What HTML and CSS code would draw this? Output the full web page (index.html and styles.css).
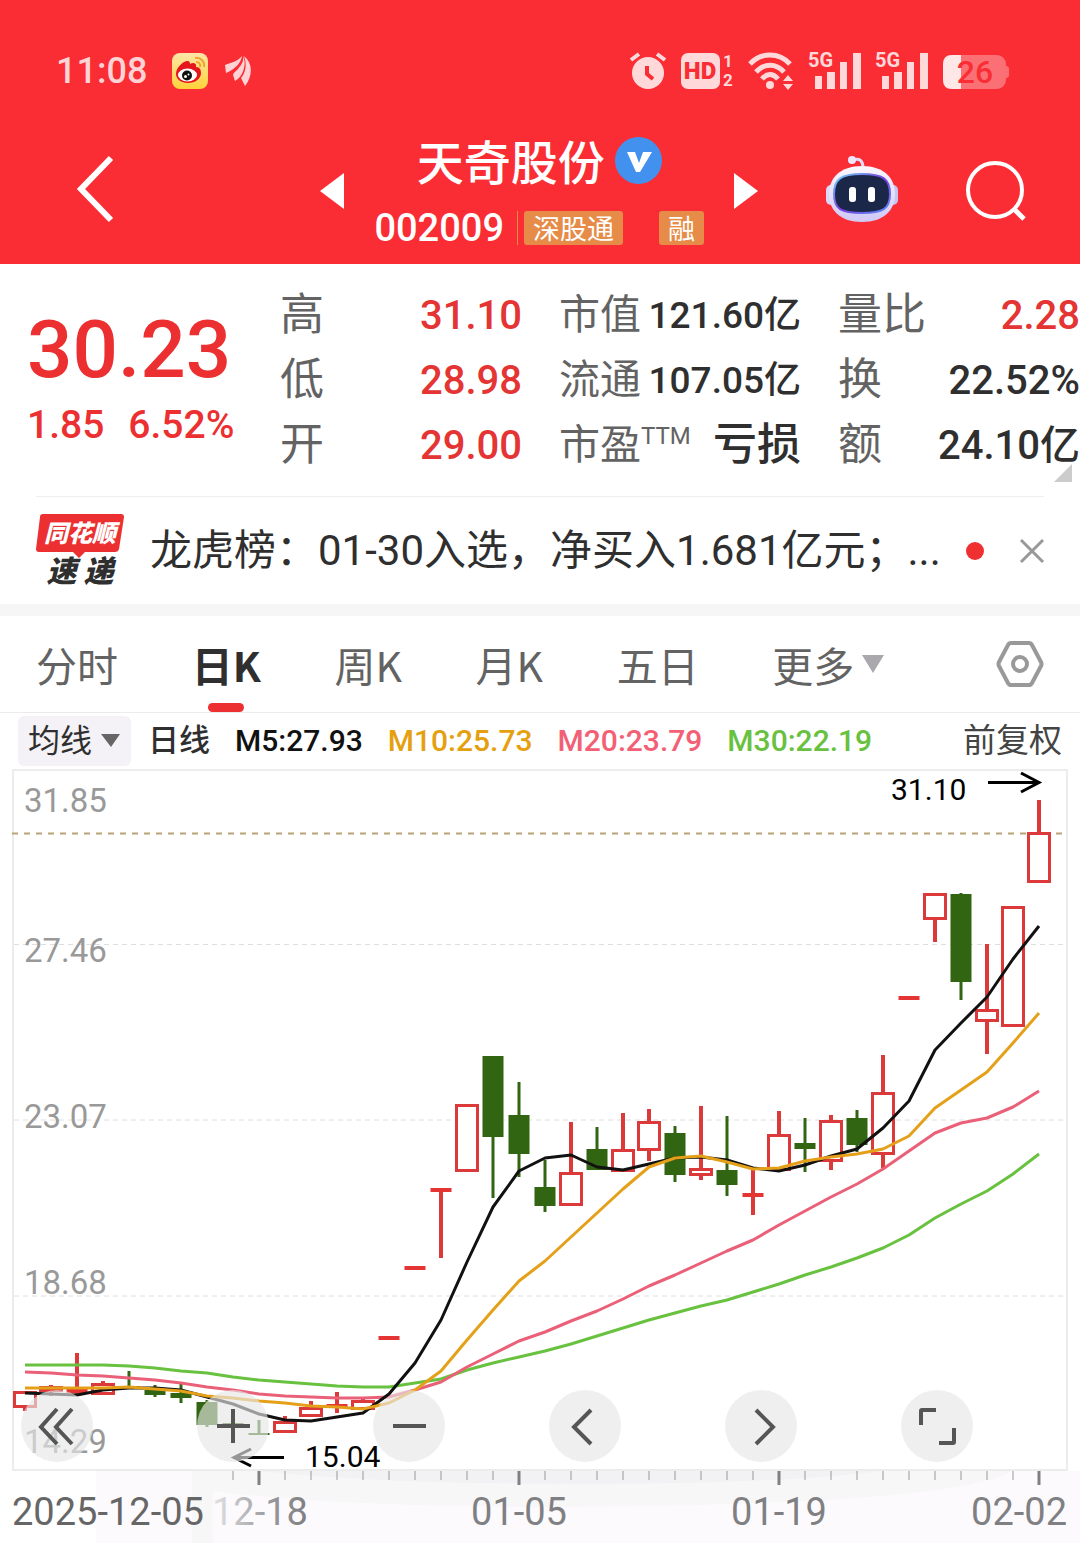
FILE: index.html
```html
<!DOCTYPE html>
<html lang="zh-CN">
<head>
    <meta charset="UTF-8">
    <meta name="viewport" content="width=device-width, initial-scale=1.0">
    <title>天奇股份 002009</title>
    <link rel="stylesheet" href="styles.css">
</head>
<body>
    <header class="top">
        <div class="status">
            <span class="clock">11:08</span>
            <svg class="weibo" width="36" height="36" viewBox="0 0 36 36">
                <defs>
                    <linearGradient id="wb" x1="0" y1="0" x2="0" y2="1">
                        <stop offset="0" stop-color="#fde6a8"/>
                        <stop offset="1" stop-color="#ffd23a"/>
                    </linearGradient>
                </defs>
                <rect width="36" height="36" rx="8" fill="url(#wb)"/>
                <path d="M4 21C4 15 10 9 15 8c3 0 3 2 3 3 3-2 7-1 6 3 4 0 5 3 5 6 0 6-6 10-13 10S4 26 4 21z" fill="#e5171c"/>
                <ellipse cx="15.500" cy="22" rx="9.500" ry="6.500" fill="#fff"/>
                <circle cx="15" cy="22.500" r="5" fill="#111"/>
                <circle cx="13.500" cy="23.500" r="1.500" fill="#fff"/>
                <circle cx="16.500" cy="21.500" r="1" fill="#fff"/>
                <path d="M23 5c6-1 10 4 9 9M24 9c3 0 5 2 4 5" fill="none" stroke="#f0a52c" stroke-width="2"/>
            </svg>
            <svg width="26" height="30" viewBox="0 0 26 30" fill="#ffd3d5">
                <path d="M0 9C5 7 12 6 17 0 16 7 10 13 1 17z"/>
                <path d="M18 0c1 6-2 9-5 13-3 3-5 4-5 6l2 6c5-3 8-8 9-13 1-4 1-8-1-12z"/>
                <path d="M19 0c9 7 9 20 1 30l-4-8c5-6 6-14 3-22z"/>
            </svg>
            <div class="status-right">
                <svg width="36" height="38" viewBox="0 0 36 38">
                    <circle cx="18" cy="21" r="16" fill="#ffd9da"/>
                    <path d="M1 8l8-6M35 8l-8-6" stroke="#ffd9da" stroke-width="4"/>
                    <path d="M17 14v8l6 5" fill="none" stroke="#fa2d34" stroke-width="4"/>
                </svg>
                <svg width="52" height="38" viewBox="0 0 52 38" fill="#ffd9da">
                    <rect y="1" width="39" height="36" rx="7"/>
                    <text class="hd" x="19" y="27" text-anchor="middle">HD</text>
                    <text class="sim" x="42" y="15">1</text>
                    <text class="sim" x="42" y="34">2</text>
                </svg>
                <svg width="46" height="38" viewBox="0 0 46 38" fill="none" stroke="#ffd9da" stroke-width="5">
                    <path d="M2 12C13 0 31 0 42 12M8 20C16 11 28 11 36 20M14 27C19 21 25 21 30 27"/>
                    <circle cx="22" cy="33" r="4" fill="#ffd9da" stroke="none"/>
                    <path d="M35 29l5-6 5 6zM35 32l5 6 5-6z" fill="#ffd9da" stroke="none"/>
                </svg>
                <svg width="52" height="38" viewBox="0 0 52 38" fill="#ffd9da">
                    <text class="net" x="-1" y="15">5G</text>
                    <path d="M6 24h7v13H6zM18 20h8v17h-8zM31 10h7v27h-7zM44 1h8v36h-8z"/>
                </svg>
                <svg width="52" height="38" viewBox="0 0 52 38" fill="#ffd9da">
                    <text class="net" x="-1" y="15">5G</text>
                    <path d="M6 24h7v13H6zM18 20h8v17h-8zM31 10h7v27h-7zM44 1h8v36h-8z"/>
                </svg>
                <svg width="66" height="38" viewBox="0 0 66 38">
                    <rect y="3" width="63" height="34" rx="9" fill="#fb7075"/>
                    <path d="M18 3H9Q0 3 0 12v16q0 9 9 9h9z" fill="#ffe6e7"/>
                    <path d="M63 14q3 0 3 3v6q0 3-3 3z" fill="#fb7075"/>
                    <text class="battery" x="32" y="31" text-anchor="middle">26</text>
                </svg>
            </div>
        </div>
        <nav class="nav">
            <button class="icon-btn" aria-label="返回">
                <svg width="36" height="66" viewBox="0 0 36 66" fill="none" stroke="#fff" stroke-width="6">
                    <path d="M34 2L4 33l30 31"/>
                </svg>
            </button>
            <div class="switch">
                <button class="icon-btn" aria-label="上一只">
                    <svg width="24" height="36" viewBox="0 0 24 36"><path d="M24 2v36L0 20z" fill="#fff"/></svg>
                </button>
                <div class="stock">
                    <h1 class="name">天奇股份
                        <svg width="47" height="47" viewBox="0 0 47 47">
                            <circle cx="23.500" cy="23.500" r="23.500" fill="#4391ee"/>
                            <path d="M12 15h8l4 11 4-11h9L25 35h-4z" fill="#fff"/>
                        </svg>
                    </h1>
                    <div class="code">
                        <span class="num">002009</span>
                        <span class="tag">深股通</span>
                        <span class="tag">融</span>
                    </div>
                </div>
                <button class="icon-btn" aria-label="下一只">
                    <svg width="24" height="36" viewBox="0 0 24 36"><path d="M0 2v36l24-18z" fill="#fff"/></svg>
                </button>
            </div>
            <button class="icon-btn" aria-label="智能助手">
                <svg width="72" height="68" viewBox="0 0 72 68">
                    <defs>
                        <linearGradient id="head" x1="0" y1="0" x2="0" y2="1">
                            <stop offset="0" stop-color="#fbf8ff"/>
                            <stop offset="1" stop-color="#cfc9f5"/>
                        </linearGradient>
                        <linearGradient id="rim" x1="0" y1="0" x2="1" y2="1">
                            <stop offset="0" stop-color="#6fd6f5"/>
                            <stop offset=".5" stop-color="#7a3fe0"/>
                            <stop offset="1" stop-color="#5a8cf5"/>
                        </linearGradient>
                    </defs>
                    <path d="M27 5c6-2 10 0 10 8" fill="none" stroke="#e6dcf8" stroke-width="3"/>
                    <circle cx="26" cy="5" r="4" fill="#efe6fb"/>
                    <rect y="30" width="12" height="20" rx="5" fill="#dcd8fa"/>
                    <rect x="60" y="30" width="12" height="20" rx="5" fill="#c6c6f3"/>
                    <path d="M36 11c22 0 33 12 33 28S58 67 36 67 3 55 3 39s11-28 33-28z" fill="url(#head)"/>
                    <path d="M36 19c21 0 28 5 28 20s-7 19-28 19S8 54 8 39s7-20 28-20z" fill="#1b2748" stroke="url(#rim)" stroke-width="2"/>
                    <rect x="23" y="32" width="7" height="15" rx="3" fill="#fff"/>
                    <rect x="42" y="32" width="7" height="15" rx="3" fill="#fff"/>
                </svg>
            </button>
            <button class="icon-btn" aria-label="搜索">
                <svg width="60" height="60" viewBox="0 0 60 60" fill="none" stroke="#fff" stroke-width="4">
                    <circle cx="29" cy="31" r="27"/>
                    <path d="M47 49l11 11" stroke-width="5"/>
                </svg>
            </button>
        </nav>
    </header>

    <section class="quote">
        <div class="price">
            <div class="last">30.23</div>
            <div class="change"><span>1.85</span><span>6.52%</span></div>
        </div>
        <dl class="stats">
            <div><dt>高</dt><dd class="up">31.10</dd></div>
            <div><dt>低</dt><dd class="up">28.98</dd></div>
            <div><dt>开</dt><dd class="up">29.00</dd></div>
        </dl>
        <dl class="stats small">
            <div><dt>市值</dt><dd>121.60亿</dd></div>
            <div><dt>流通</dt><dd>107.05亿</dd></div>
            <div><dt>市盈<sup>TTM</sup></dt><dd class="loss">亏损</dd></div>
        </dl>
        <dl class="stats">
            <div><dt>量比</dt><dd class="up">2.28</dd></div>
            <div><dt>换</dt><dd>22.52%</dd></div>
            <div><dt>额</dt><dd>24.10亿</dd></div>
        </dl>
        <svg class="corner" width="18" height="18" viewBox="0 0 18 18"><path d="M18 0v18H0z" fill="#ccc"/></svg>
    </section>

    <section class="news">
        <svg width="88" height="74" viewBox="0 0 88 74">
            <path d="M7 0h78q3 0 3 3l-5 32q-1 3-4 3H49l-6 6-6-6H3q-3 0-3-3L4 3q0-3 3-3z" fill="#ec2f30"/>
            <text class="logo-top" x="44" y="28" text-anchor="middle">同花顺</text>
            <text class="logo-bottom" x="44" y="68" text-anchor="middle">速 递</text>
        </svg>
        <a class="news-text" href="#">龙虎榜：01-30入选，净买入1.681亿元；...</a>
        <i class="dot"></i>
        <button class="icon-btn" aria-label="关闭">
            <svg width="24" height="24" viewBox="0 0 24 24" stroke="#999" stroke-width="3"><path d="M1 1l22 22M23 1L1 23"/></svg>
        </button>
    </section>

    <nav class="tabs">
        <button>分时</button>
        <button class="active">日K</button>
        <button>周K</button>
        <button>月K</button>
        <button>五日</button>
        <button>更多<svg width="22" height="18" viewBox="0 0 22 18"><path d="M0 0h22L11 18z" fill="#aaa8ac"/></svg></button>
        <button class="setting" aria-label="设置">
            <svg width="48" height="48" viewBox="0 0 48 48" fill="none" stroke="#999" stroke-width="4">
                <path d="M15 3h18q2 0 3 2l9 17q1 2 0 4l-9 17q-1 2-3 2H15q-2 0-3-2L3 26q-1-2 0-4l9-17q1-2 3-2z"/>
                <circle cx="24" cy="24" r="7"/>
            </svg>
        </button>
    </nav>

    <div class="legend">
        <button class="ma-btn">均线<svg width="19" height="13" viewBox="0 0 19 13"><path d="M0 0h19L10 13z" fill="#666"/></svg></button>
        <span class="period">日线</span>
        <span class="m5">M5:27.93</span>
        <span class="m10">M10:25.73</span>
        <span class="m20">M20:23.79</span>
        <span class="m30">M30:22.19</span>
        <button class="adjust">前复权</button>
    </div>

    <section class="chart">
        <svg class="kline" id="kline" viewBox="0 768 1080 775">
            <defs>
                <linearGradient id="fade" x1="0" x2="1" y1="0" y2="0">
                    <stop offset="0" stop-color="#e4e4e6"/>
                    <stop offset=".6" stop-color="#99999b"/>
                    <stop offset="1" stop-color="#7e7e82"/>
                </linearGradient>
            </defs>
            <!-- date strip -->
            <rect x="96" y="1471" width="984" height="72" fill="#fdfafe"/>
            <path d="M192 1471h820q-60 36-500 36-200-2-299-16v52h-21z" fill="#f7f7f8"/>
            <path d="M260 1471h620q-100 13-300 13t-320-13z" fill="#f2f1f3"/>
            <!-- frame and grid -->
            <rect class="frame" x="13" y="770" width="1054" height="700"/>
            <path class="grid" d="M14 944.500h1053M14 1120h1053M14 1296h1053"/>
            <path class="now" d="M12 833.500h1055"/>
            <g class="axis">
                <text x="24" y="812">31.85</text>
                <text x="24" y="962">27.46</text>
                <text x="24" y="1128">23.07</text>
                <text x="24" y="1294">18.68</text>
                <text x="24" y="1453">14.29</text>
            </g>
            <g id="candles"></g>
            <g id="lines"></g>
            <g id="ticks"></g>
            <text class="mark" x="891" y="800">31.10</text>
            <path class="arrow" d="M988 782.500h50M1021 773l18 9.500-18 9.500"/>
            <text class="mark" x="305" y="1467">15.04</text>
            <path class="arrow" d="M284 1457.500h-50M251 1449l-17 8.500 17 8.500"/>
            <g class="date">
                <text class="first" x="12" y="1525">2025-12-05</text>
                <text x="212" y="1525" fill="url(#fade)">12-18</text>
                <text x="519" y="1525" text-anchor="middle">01-05</text>
                <text x="779" y="1525" text-anchor="middle">01-19</text>
                <text x="1067" y="1525" text-anchor="end">02-02</text>
            </g>
        </svg>
        <div class="tools">
            <button aria-label="最左"><svg viewBox="0 0 72 72"><path d="M36 19L20 37l16 17M51 19L35 37l16 17"/></svg></button>
            <button aria-label="放大"><svg viewBox="0 0 72 72"><path d="M20 36h33M36 19v34"/></svg></button>
            <button aria-label="缩小"><svg viewBox="0 0 72 72"><path d="M20 36h33"/></svg></button>
            <button aria-label="左移"><svg viewBox="0 0 72 72"><path d="M42 20L25 37l17 17"/></svg></button>
            <button aria-label="右移"><svg viewBox="0 0 72 72"><path d="M31 20l17 17-17 17"/></svg></button>
            <button aria-label="全屏"><svg viewBox="0 0 72 72"><path d="M20 35V21q0-1 1-1h14M53 38v14q0 1-1 1H38"/></svg></button>
        </div>
    </section>

    <script src="chart.js"></script>
</body>
</html>
```

FILE: styles.css
```css
* { box-sizing: border-box; }
body { margin: 0; background: #fff; color: #2f2f2f; font-family: "Noto Sans CJK SC", "Noto Sans", sans-serif; }
svg { display: block; flex: none; overflow: visible; }
button { margin: 0; padding: 0; border: none; background: none; color: inherit; font: inherit; cursor: pointer; }
h1, dl, dd { margin: 0; }

/* header */
.top { height: 264px; background: #fa2d34; color: #fff; }
.status { display: flex; align-items: center; height: 142px; padding: 0 71px 0 56px; }
.clock { color: #ffd3d5; font: 500 36px/44px Roboto, sans-serif; }
.weibo { margin: 0 17px 0 25px; }
.status-right { display: flex; gap: 15px; margin-left: auto; }
.hd { font: 900 24px Roboto, sans-serif; fill: #fa2d34; }
.sim { font: 700 17px Roboto, sans-serif; }
.net { font: 700 20px Roboto, sans-serif; }
.battery { font: 500 32px Roboto, sans-serif; fill: #fa2d34; }
.nav { display: flex; align-items: center; gap: 68px; height: 94px; padding: 0 54px 0 77px; }
.icon-btn { display: block; }
.switch { display: flex; align-items: center; gap: 30px; margin-left: auto; }
.stock { display: flex; flex-direction: column; align-items: center; gap: 18px; }
.name { display: flex; align-items: center; gap: 10px; font-size: 47px; font-weight: 500; line-height: 60px; }
.code { display: flex; align-items: center; height: 40px; }
.code .num { margin-right: 6px; padding-right: 13px; border-right: 1px solid #e68c48; font: 500 38px/34px Roboto, sans-serif; }
.tag { padding: 0 9px; border-radius: 3px; background: #e68c48; font-size: 27px; line-height: 34px; }
.tag + .tag { margin-left: 36px; }

/* quote */
.quote { position: relative; display: flex; gap: 37px; padding: 19px 0 18px 27px; font-family: Roboto, "Noto Sans CJK SC", sans-serif; }
.price { flex: 1; min-width: 0; color: #ec2f30; font-weight: 500; white-space: nowrap; }
.last { margin-top: 20px; font-size: 80px; line-height: 94px; }
.change { display: flex; gap: 24px; font-size: 39px; line-height: 56px; }
.stats { width: 242px; color: #2f2f2f; font-size: 40px; font-weight: 500; }
.stats div { display: flex; justify-content: space-between; line-height: 65px; white-space: nowrap; }
.stats dt { color: #636363; font-size: 44px; font-weight: 400; }
.stats.small { font-size: 37px; }
.stats.small dt { font-size: 41px; }
.stats sup { font-size: 24px; line-height: 0; }
.stats .loss { font-size: 44px; }
.stats .up { color: #e43434; }
.corner { position: absolute; right: 8px; bottom: 14px; }

/* news */
.news { display: flex; align-items: center; height: 108px; margin: 0 36px; border-top: 1px solid #eee; }
.news-text { flex: 1; margin-left: 26px; overflow: hidden; color: #2f2f2f; font: 42px/60px Roboto, "Noto Sans CJK SC", sans-serif; text-decoration: none; white-space: nowrap; }
.dot { width: 18px; height: 18px; margin: 0 36px 0 20px; border-radius: 50%; background: #f03030; }
.logo-top { font-size: 24px; font-weight: 900; font-style: italic; fill: #fff; }
.logo-bottom { font-size: 30px; font-weight: 900; font-style: italic; fill: #2f2f2f; }

/* tabs */
.tabs { display: flex; justify-content: space-between; align-items: center; height: 109px; padding: 0 36px; border-top: 12px solid #f6f6f6; border-bottom: 1px solid #ececec; color: #636363; font-size: 41px; }
.tabs button { position: relative; display: flex; align-items: center; gap: 8px; height: 96px; }
.tabs .active { color: #2f2f2f; font-weight: 700; }
.tabs .active::after { content: ""; position: absolute; left: 50%; bottom: 0; width: 36px; height: 9px; margin-left: -18px; border-radius: 5px; background: #ec2f30; }
.tabs .setting { margin-left: 38px; }

/* legend */
.legend { display: flex; align-items: center; gap: 25px; height: 55px; padding: 0 18px; font: 500 30px/54px Roboto, "Noto Sans CJK SC", sans-serif; white-space: nowrap; }
.ma-btn { display: flex; align-items: center; gap: 9px; height: 50px; padding: 0 11px 0 10px; border-radius: 6px; background: #f5f2f7; font-size: 32px; font-weight: 400; }
.period { margin-left: -8px; font-size: 31px; }
.m5 { color: #111; }
.m10 { color: #e5a010; }
.m20 { color: #f36075; }
.m30 { color: #68c13f; }
.adjust { margin-left: auto; color: #444; font-size: 33px; font-weight: 400; }

/* chart */
.chart { position: relative; }
.kline { width: 100%; height: auto; }
.frame { fill: none; stroke: #ececec; stroke-width: 2; }
.grid { stroke: #dedede; stroke-width: 1; stroke-dasharray: 5 4; }
.now { stroke: #b8a474; stroke-width: 2; stroke-dasharray: 6 6; }
.axis { font: 33px Roboto, sans-serif; fill: #999; }
.up-bar { fill: #fff; stroke: #dc3a3a; stroke-width: 3; }
.up-wick { stroke: #dc3a3a; stroke-width: 4; }
.down-bar { fill: #316511; }
.down-wick { stroke: #316511; stroke-width: 3; }
.ma { fill: none; stroke-width: 3; stroke-linejoin: round; }
.mark { font: 30px Roboto, sans-serif; fill: #000; }
.arrow { fill: none; stroke: #000; stroke-width: 3; }
.tick { stroke: #999; stroke-width: 1; }
.tick-major { stroke: #808083; stroke-width: 3; }
.date { font: 38px Roboto, sans-serif; fill: #808083; }
.date .first { fill: #666; }
.tools { position: absolute; left: 0; top: 0; display: flex; gap: 104px; padding: 622px 0 0 21px; }
.tools button { width: 72px; height: 72px; border-radius: 50%; background: rgba(230, 230, 230, .65); }
.tools path { fill: none; stroke: #555; stroke-width: 4; }
```

FILE: chart.js
```js
const NS = 'http://www.w3.org/2000/svg';
const START = 25;
const STEP = 26;

// [direction, high, body top, body bottom, low] in chart units
const candles = [
    ['up', 1391, 1391, 1408, 1411], ['up', 1385, 1386, 1392, 1396], ['up', 1353, 1389, 1393, 1394],
    ['up', 1381, 1383, 1395, 1395], ['down', 1371, 1386, 1388, 1388], ['down', 1385, 1390, 1395, 1397],
    ['down', 1384, 1393, 1398, 1403], ['down', 1400, 1402, 1425, 1427], ['down', 1412, 1423, 1426, 1430],
    ['down', 1420, 1433, 1435, 1435], ['up', 1416, 1421, 1433, 1433], ['up', 1401, 1407, 1417, 1417],
    ['up', 1392, 1404, 1407, 1413], ['up', 1399, 1400, 1410, 1410], ['up', 1336, 1336, 1340, 1340],
    ['up', 1266, 1266, 1270, 1270], ['up', 1188, 1188, 1192, 1258], ['up', 1104, 1104, 1172, 1172],
    ['down', 1056, 1056, 1137, 1198], ['down', 1082, 1115, 1154, 1177], ['down', 1160, 1187, 1206, 1212],
    ['up', 1122, 1172, 1206, 1206], ['down', 1127, 1149, 1170, 1170], ['up', 1113, 1149, 1172, 1172],
    ['up', 1109, 1121, 1151, 1161], ['down', 1126, 1133, 1175, 1182], ['up', 1106, 1168, 1176, 1180],
    ['down', 1116, 1170, 1185, 1196], ['up', 1167, 1193, 1197, 1215], ['up', 1111, 1134, 1171, 1171],
    ['down', 1118, 1143, 1149, 1172], ['up', 1115, 1120, 1162, 1170], ['down', 1110, 1118, 1145, 1152],
    ['up', 1055, 1092, 1155, 1168], ['up', 996, 996, 1000, 1000], ['up', 893, 893, 920, 942],
    ['down', 893, 894, 982, 1000], ['up', 944, 1009, 1022, 1054], ['up', 906, 906, 1027, 1027],
    ['up', 800, 832, 883, 883]
];

const averages = {
    '#68c13f': [1365, 1365, 1365, 1365, 1366, 1368, 1371, 1373, 1377, 1380, 1382, 1384, 1386, 1387, 1387, 1383, 1379, 1370, 1363, 1357,
        1351, 1344, 1336, 1328, 1320, 1313, 1306, 1300, 1292, 1284, 1275, 1267, 1258, 1248, 1235, 1218, 1204, 1191, 1174, 1154],
    '#ea6078': [1372, 1373, 1375, 1376, 1378, 1380, 1383, 1387, 1390, 1394, 1396, 1397, 1398, 1398, 1397, 1390, 1382, 1367, 1354, 1341,
        1332, 1321, 1311, 1299, 1286, 1275, 1263, 1251, 1240, 1225, 1211, 1197, 1184, 1169, 1151, 1133, 1123, 1118, 1107, 1091],
    '#111': [1393, 1394, 1395, 1390, 1388, 1388, 1390, 1397, 1404, 1414, 1420, 1421, 1417, 1413, 1394, 1363, 1320, 1262, 1207, 1171,
        1158, 1155, 1167, 1170, 1164, 1158, 1157, 1160, 1168, 1171, 1165, 1156, 1149, 1128, 1101, 1050, 1023, 997, 959, 926],
    '#e5a01a': [1388, 1388, 1388, 1388, 1387, 1389, 1391, 1396, 1398, 1401, 1403, 1406, 1407, 1409, 1403, 1390, 1371, 1340, 1310, 1281,
        1261, 1237, 1213, 1189, 1167, 1158, 1156, 1162, 1169, 1168, 1161, 1157, 1154, 1149, 1136, 1108, 1090, 1072, 1043, 1013]
};

function add(parent, tag, attrs) {
    const el = document.createElementNS(NS, tag);
    for (const key in attrs) el.setAttribute(key, attrs[key]);
    document.getElementById(parent).appendChild(el);
}

candles.forEach(([dir, high, top, bottom, low], i) => {
    const x = START + i * STEP;
    add('candles', 'path', { class: dir + '-wick', d: `M${x} ${high}V${low}` });
    if (dir === 'down') {
        add('candles', 'rect', { class: 'down-bar', x: x - 10.5, y: top, width: 21, height: bottom - top });
    } else if (bottom - top < 5) {
        // open equals close, only a dash
        add('candles', 'rect', { x: x - 10.5, y: top, width: 21, height: bottom - top, fill: '#e43434' });
    } else {
        add('candles', 'rect', { class: 'up-bar', x: x - 10.5, y: top + 1.5, width: 21, height: bottom - top - 3 });
    }
});

for (const color in averages) {
    const points = averages[color].map((y, i) => `${START + i * STEP},${y}`).join(' ');
    add('lines', 'polyline', { class: 'ma', stroke: color, points });
}

for (let i = 8; i < 40; i++) {
    const x = START + i * STEP;
    const major = i % 10 === 9;
    add('ticks', 'path', { class: major ? 'tick-major' : 'tick', d: `M${x} 1471v${major ? 14 : 9}` });
}
```
